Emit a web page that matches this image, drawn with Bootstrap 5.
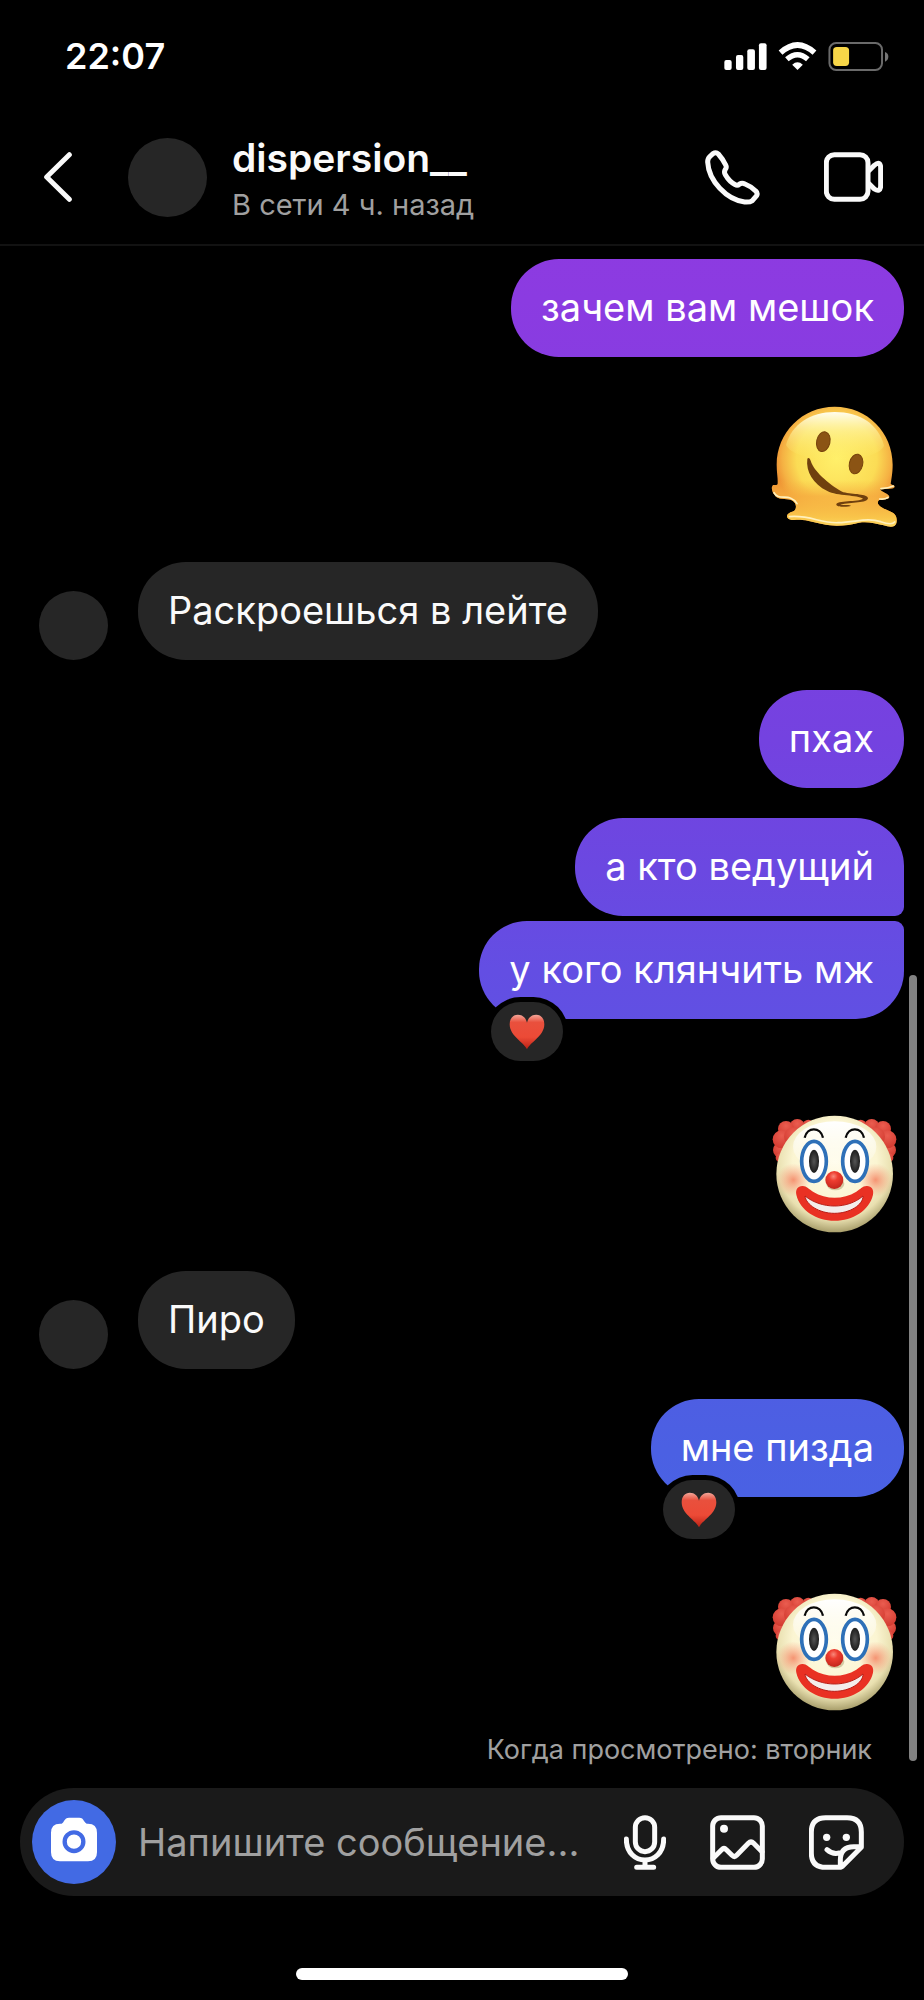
<!DOCTYPE html>
<html lang="ru" data-bs-theme="dark">
<head>
<meta charset="utf-8">
<meta name="viewport" content="width=device-width, initial-scale=1">
<title>dispersion__</title>
<link href="https://cdn.jsdelivr.net/npm/bootstrap@5.3.0/dist/css/bootstrap.min.css" rel="stylesheet">
<style>
body { background: #000; color: #fafafa; font-family: Inter, "Liberation Sans", sans-serif; }
svg { display: block; flex: none; }
.ink { fill: none; stroke: #fafafa; stroke-width: 15; stroke-linecap: round; stroke-linejoin: round; }
.statusbar { height: 112px; padding: 0 35px 0 65px; }
.clock { font-size: 36px; line-height: 48px; font-weight: 600; color: #fff; }
.chat-head { height: 134px; padding: 0 41px 2px 44px; border-bottom: 2px solid #121212; }
.face { flex: none; border-radius: 50%; background: #262626; }
.face-lg { width: 79px; height: 79px; margin: 0 25px 0 56px; }
.face-sm { width: 69px; height: 69px; margin-right: 30px; }
.peer { font-size: 39px; line-height: 56px; font-weight: 600; }
.presence { font-size: 29px; line-height: 38px; color: #a0a0a0; }
.call-tools { gap: 64px; }
.thread { padding: 13px 20px 0; gap: 30px; }
.row-in { padding-left: 19px; }
.bubble { position: relative; padding: 23px 30px 25px; font-size: 38px; line-height: 50px; border-radius: 48px; }
.bubble-in { background: #262626; }
.bubble-out { color: #fff; background: linear-gradient(#943adf 0, #8b3be1 300px, #7442e0 740px, #6b48e1 870px, #634ee3 970px, #4b60e3 1450px, #4169e6 1850px) fixed; }
.joined-top { border-bottom-right-radius: 9px; }
.joined-bottom { border-top-right-radius: 9px; }
.pair { gap: 5px; }
.reacted { margin-bottom: 47px; }
.reaction { position: absolute; left: 12px; bottom: -42px; width: 72px; height: 59px; border-radius: 30px; background: #262626; box-shadow: 0 0 0 5px #000; }
.seen { padding-right: 32px; font-size: 27px; line-height: 36px; color: #a0a0a0; margin-top: -17px; }
.scroll-thumb { position: absolute; right: 7px; bottom: 27px; width: 8px; height: 51%; border-radius: 4px; background: #828282; }
.composer { margin: 0 20px 72px; padding: 12px 40px 12px 12px; border-radius: 54px; background: #1a1a1a; }
.shot { width: 84px; height: 84px; border-radius: 50%; background: #426ae4; }
.composer input { min-width: 0; margin: 0 20px 0 22px; padding: 0; border: 0; background: none; color: #fafafa; font-size: 38px; line-height: 50px; outline: 0; }
.composer input::placeholder { color: #a0a0a0; opacity: 1; }
.compose-tools { gap: 44px; }
.home-bar { width: 36%; height: 12px; margin-bottom: 20px; border-radius: 6px; background: #fff; }
</style>
</head>
<body>
<svg width="0" height="0" class="position-absolute" aria-hidden="true">
  <defs>
    <linearGradient id="heartFill" x1="0" y1="0" x2="0" y2="1"><stop offset="0" stop-color="#f3a79a"/><stop offset=".22" stop-color="#e9503d"/><stop offset=".65" stop-color="#ec4a36"/><stop offset="1" stop-color="#b92115"/></linearGradient>
    <radialGradient id="skin" cx=".5" cy=".4" r=".6"><stop offset="0" stop-color="#fffce9"/><stop offset=".6" stop-color="#fbf5d2"/><stop offset=".82" stop-color="#e9e0b0"/><stop offset="1" stop-color="#a99f6c"/></radialGradient>
    <linearGradient id="shine" x1="0" y1="0" x2="0" y2="1"><stop offset="0" stop-color="#fff"/><stop offset="1" stop-color="#fff" stop-opacity="0"/></linearGradient>
    <linearGradient id="goldShine" x1="0" y1="0" x2="0" y2="1"><stop offset="0" stop-color="#fffef0"/><stop offset=".4" stop-color="#fff7a8" stop-opacity=".6"/><stop offset="1" stop-color="#fff06a" stop-opacity="0"/></linearGradient>
    <radialGradient id="blush"><stop offset="0" stop-color="#f58a69" stop-opacity=".9"/><stop offset="1" stop-color="#f9a080" stop-opacity="0"/></radialGradient>
    <radialGradient id="hair" cx=".5" cy=".3" r=".7"><stop offset="0" stop-color="#ea5d50"/><stop offset="1" stop-color="#d23a2f"/></radialGradient>
    <radialGradient id="nose" cx=".45" cy=".3" r=".7"><stop offset="0" stop-color="#f8897b"/><stop offset=".35" stop-color="#ee3d30"/><stop offset="1" stop-color="#c3261c"/></radialGradient>
    <radialGradient id="pupil"><stop offset="0" stop-color="#555"/><stop offset="1" stop-color="#1c1c1c"/></radialGradient>
    <radialGradient id="gold" gradientUnits="userSpaceOnUse" cx="290" cy="235" r="185"><stop offset="0" stop-color="#fff06a"/><stop offset=".65" stop-color="#fbdc55"/><stop offset=".88" stop-color="#f5b143"/><stop offset="1" stop-color="#ee9233"/></radialGradient>
    <linearGradient id="puddle" gradientUnits="userSpaceOnUse" x1="0" y1="300" x2="0" y2="440"><stop offset="0" stop-color="#f7b742" stop-opacity="0"/><stop offset=".35" stop-color="#f6ae40" stop-opacity=".8"/><stop offset=".8" stop-color="#f9c54a"/><stop offset="1" stop-color="#fbd660"/></linearGradient>
    <symbol id="heart" viewBox="160 1034 106 106">
      <path fill="url(#heartFill)" d="M213 1138C204 1117 162 1099 162 1064C162 1047 172 1036 186 1036C200 1036 210 1045 213 1060C216 1045 226 1036 240 1036C254 1036 264 1047 264 1064C264 1099 222 1117 213 1138Z"/>
    </symbol>
    <symbol id="clown" viewBox="57 18 435 435">
      <g fill="url(#hair)">
        <g id="curls"><circle cx="205" cy="106" r="17"/><circle cx="122" cy="180" r="23"/><circle cx="121" cy="203" r="14"/><circle cx="172" cy="110" r="23"/><circle cx="138" cy="117" r="24"/><circle cx="125" cy="148" r="27"/><circle cx="160" cy="140" r="28"/></g>
        <use href="#curls" transform="matrix(-1 0 0 1 567 0)"/>
      </g>
      <circle cx="284" cy="252" r="175" fill="url(#skin)"/>
      <ellipse cx="284" cy="170" rx="125" ry="76" fill="url(#shine)"/>
      <circle cx="160" cy="270" r="50" fill="url(#blush)"/><circle cx="407" cy="270" r="50" fill="url(#blush)"/>
      <g id="clownEye">
        <path d="M194 143C202 110 241 110 249 143" fill="none" stroke="#080808" stroke-width="7"/>
        <ellipse cx="222" cy="214" rx="37" ry="60" fill="#fff" stroke="#2e70b8" stroke-width="11"/>
        <ellipse cx="222" cy="214" rx="15" ry="35" fill="url(#pupil)"/>
      </g>
      <use href="#clownEye" x="123"/>
      <ellipse cx="286" cy="281" rx="27" ry="20" fill="#b3a674" opacity=".55"/>
      <circle cx="283" cy="270" r="27" fill="url(#nose)"/>
      <path d="M187 288C199 287 207 298 219 305C259 329 309 329 349 305C361 298 368 287 381 288C395 289 402 299 399 314C388 362 338 392 284 392C230 392 180 362 169 314C166 299 173 289 187 288Z" fill="#e93123"/>
      <path d="M195 318C245 358 323 358 369 318C370 344 330 370 283 370C237 370 198 344 195 318Z" fill="#f4eeec" stroke="#b91e16" stroke-width="3"/>
    </symbol>
    <symbol id="melting" viewBox="57 21 435 435">
      <path fill="url(#gold)" d="M284 80C382 80 458 157 458 254C458 280 454 297 452 312C457 315 464 316 464 320C463 328 440 325 420 328C424 337 447 341 448 351C447 361 421 356 415 362C407 378 435 387 454 396C470 402 472 418 469 430C465 444 447 441 431 436C405 429 381 424 357 428C330 434 300 440 270 436C237 432 214 422 187 420C170 418 150 424 143 414C136 403 150 398 160 394C173 387 169 367 155 361C137 353 113 362 104 345C97 338 91 321 100 315C107 314 113 316 113 311C114 295 110 278 110 254C110 157 187 80 284 80Z"/>
      <path fill="url(#puddle)" d="M112 300H456L452 312C457 315 464 316 464 320C463 328 440 325 420 328C424 337 447 341 448 351C447 361 421 356 415 362C407 378 435 387 454 396C470 402 472 418 469 430C465 444 447 441 431 436C405 429 381 424 357 428C330 434 300 440 270 436C237 432 214 422 187 420C170 418 150 424 143 414C136 403 150 398 160 394C173 387 169 367 155 361C137 353 113 362 104 345C97 338 91 321 100 315C107 314 113 316 113 311Z"/>
      <path d="M284 96C360 96 416 133 432 197C405 255 167 255 138 195C155 133 211 96 284 96Z" fill="url(#goldShine)"/>
      <g fill="none" stroke="#fff0bd" stroke-width="5" stroke-linecap="round"><path d="M102 338C112 359 136 347 151 354C161 358 167 364 171 371"/><path d="M148 410C210 404 242 431 295 428C350 426 382 412 422 425C444 433 458 434 464 426"/><path d="M423 326Q446 324 460 318M419 357Q435 359 444 352"/></g>
      <g fill="#8b5414" stroke="#76420c" stroke-width="3"><ellipse cx="250" cy="185" rx="20" ry="30" transform="rotate(13 250 185)"/><ellipse cx="348" cy="252" rx="20" ry="30" transform="rotate(13 348 252)"/></g>
      <path fill="#70400e" d="M202 236C206 231 210 236 212 242C222 278 280 321 310 337C339 343 383 342 384 355C383 370 333 366 301 374C307 377 327 372 333 377C325 382 291 382 289 374C287 360 357 366 369 356C353 344 292 349 262 333C219 312 197 274 202 236Z"/>
    </symbol>
  </defs>
</svg>

<div class="min-vh-100 d-flex flex-column">
  <div class="statusbar d-flex align-items-center justify-content-between">
    <time class="clock">22:07</time>
    <svg width="165" height="29" viewBox="786 126 496 87" role="img" aria-label="Сеть, Wi-Fi, батарея">
      <g fill="#fff"><rect x="787" y="180" width="22" height="30" rx="6"/><rect x="822" y="165" width="22" height="45" rx="6"/><rect x="856" y="148" width="23" height="62" rx="6"/><rect x="891" y="130" width="23" height="80" rx="6"/></g>
      <path d="M956 158Q1007 112 1058 158" fill="none" stroke="#fff" stroke-width="17"/>
      <path d="M975 178Q1007 150 1038 178" fill="none" stroke="#fff" stroke-width="16"/>
      <path d="M991 194Q1007 180 1023 194L1007 210Z" fill="#fff"/>
      <rect x="1103" y="129" width="158" height="81" rx="20" fill="none" stroke="#6a6a6a" stroke-width="6"/>
      <rect x="1114" y="141" width="48" height="57" rx="11" fill="#f8d748"/>
      <path d="M1270 156Q1280 160 1280 170T1270 185Z" fill="#757575"/>
    </svg>
  </div>

  <header class="chat-head d-flex align-items-center">
    <button type="button" class="btn p-0 border-0" aria-label="Назад"><svg width="28" height="50" viewBox="132 457 84 150"><path class="ink" d="M208 465L140 532L208 599"/></svg></button>
    <span class="face face-lg"></span>
    <div class="me-auto">
      <div class="peer">dispersion__</div>
      <div class="presence">В сети 4 ч. назад</div>
    </div>
    <div class="call-tools d-flex align-items-center">
      <button type="button" class="btn p-0 border-0" aria-label="Аудиозвонок"><svg width="55" height="55" viewBox="730 449 165 165"><path class="ink" d="M754 460Q763 454 770 461Q784 477 792 494Q796 501 791 507Q786 515 791 523Q803 544 821 553Q827 557 834 551Q841 547 850 551Q868 558 882 572Q889 578 885 586L872 601Q865 606 849 605C795 598 741 542 738 485Q738 474 745 468Z"/></svg></button>
      <button type="button" class="btn p-0 border-0" aria-label="Видеозвонок"><svg width="59" height="50" viewBox="1086 457 177 150"><g class="ink"><rect x="1093" y="465" width="125" height="134" rx="24"/><path d="M1222 512L1237 497Q1254 483 1256 502V560Q1254 579 1237 568L1222 553"/></g></svg></button>
    </div>
  </header>

  <main class="thread position-relative flex-grow-1 d-flex flex-column">
    <div class="bubble bubble-out align-self-end">зачем вам мешок</div>
    <svg class="align-self-end" width="145" height="145" role="img" aria-label="Тающее лицо"><use href="#melting"/></svg>
    <div class="row-in d-flex align-items-end"><span class="face face-sm"></span><div class="bubble bubble-in">Раскроешься в лейте</div></div>
    <div class="bubble bubble-out align-self-end">пхах</div>
    <div class="pair d-flex flex-column align-items-end reacted">
      <div class="bubble bubble-out joined-top">а кто ведущий</div>
      <div class="bubble bubble-out joined-bottom">у кого клянчить мж
        <span class="reaction d-flex align-items-center justify-content-center"><svg width="36" height="36" role="img" aria-label="Сердце"><use href="#heart"/></svg></span>
      </div>
    </div>
    <svg class="align-self-end" width="145" height="145" role="img" aria-label="Клоун"><use href="#clown"/></svg>
    <div class="row-in d-flex align-items-end"><span class="face face-sm"></span><div class="bubble bubble-in">Пиро</div></div>
    <div class="bubble bubble-out align-self-end reacted">мне пизда
      <span class="reaction d-flex align-items-center justify-content-center"><svg width="36" height="36" role="img" aria-label="Сердце"><use href="#heart"/></svg></span>
    </div>
    <svg class="align-self-end" width="145" height="145" role="img" aria-label="Клоун"><use href="#clown"/></svg>
    <div class="seen align-self-end">Когда просмотрено: вторник</div>
    <span class="scroll-thumb"></span>
  </main>

  <form class="composer d-flex align-items-center">
    <button type="button" class="shot btn p-0 border-0 flex-shrink-0 d-flex align-items-center justify-content-center" aria-label="Камера"><svg width="84" height="84" viewBox="96 121 252 252"><path fill="#fff" d="M185 192Q190 189 192 184Q197 174 207 174H238Q248 174 252 184Q255 189 260 192H264Q291 192 291 219V278Q291 305 264 305H180Q153 305 153 278V219Q153 192 180 192Z"/><circle cx="222" cy="246" r="28" fill="none" stroke="#426ae4" stroke-width="13"/></svg></button>
    <input type="text" class="flex-grow-1" placeholder="Напишите сообщение..." aria-label="Напишите сообщение">
    <div class="compose-tools d-flex align-items-center flex-shrink-0">
      <button type="button" class="btn p-0 border-0" aria-label="Голосовое сообщение"><svg width="42" height="55" viewBox="480 345 126 165"><g class="ink"><rect x="514" y="353" width="58" height="102" rx="29"/><path d="M487 417C487 501 599 501 599 417M543 480V502M518 502H569"/></g></svg></button>
      <button type="button" class="btn p-0 border-0" aria-label="Галерея"><svg width="55" height="55" viewBox="742 345 165 165"><g class="ink"><rect x="750" y="353" width="149" height="149" rx="25"/><path d="M752 474L777 449Q784 442 791 449L808 466Q815 473 822 466L857 430Q865 422 873 430L898 455"/></g><circle cx="784" cy="386" r="12" fill="#fafafa"/></svg></button>
      <button type="button" class="btn p-0 border-0" aria-label="Стикеры"><svg width="55" height="55" viewBox="1038 345 165 165"><path class="ink" d="M1132 502H1088Q1045 502 1045 459V396Q1045 353 1088 353H1152Q1195 353 1195 396V442L1137 500Q1132 504 1132 494V480Q1132 440 1172 440H1193M1092 449Q1108 464 1129 459"/><circle cx="1091" cy="412" r="11" fill="#fafafa"/><circle cx="1150" cy="412" r="11" fill="#fafafa"/></svg></button>
    </div>
  </form>
  <div class="home-bar mx-auto"></div>
</div>
<script src="https://cdn.jsdelivr.net/npm/bootstrap@5.3.0/dist/js/bootstrap.bundle.min.js"></script>
</body>
</html>
